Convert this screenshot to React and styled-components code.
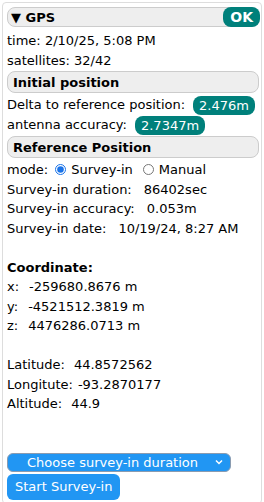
import React from 'react'
import styled, { createGlobalStyle } from 'styled-components'

const GlobalStyle = createGlobalStyle`
  body {
    margin: 0;
    background: #fff;
    font-family: "DejaVu Sans", Verdana, sans-serif;
    font-size: 13px;
    color: #000;
  }
`

const Panel = styled.div`
  margin: 2px;
  border: 1px solid #ddd;
  border-radius: 4px;
  padding: 4px 2px 4px 4px;
  height: 502px;
  box-sizing: border-box;
`

const Header = styled.div`
  display: flex;
  align-items: center;
  justify-content: space-between;
  background: #eee;
  border: 1px solid #ccc;
  border-radius: 8px;
  height: ${ ({ $top }) => $top ? 20 : 22 }px;
  box-sizing: border-box;
  padding-left: ${ ({ $top }) => $top ? 3 : 5 }px;
  font-weight: bold;
  font-size: 13px;
  margin: ${ ({ $top }) => $top ? '0 0 4px' : '1px 0 2px' };
`

const Badge = styled.span`
  display: inline-flex;
  align-items: center;
  background: #00807b;
  color: #fff;
  border-radius: 8px;
  padding: 0 ${ ({ $bold }) => $bold ? 7 : 6 }px;
  height: ${ ({ $bold }) => $bold ? 20 : 19 }px;
  margin-left: ${ ({ $bold }) => $bold ? 0 : 4 }px;
  margin-right: ${ ({ $bold }) => $bold ? -2 : 0 }px;
  font-weight: ${ ({ $bold }) => $bold ? 'bold' : 'normal' };
  font-size: ${ ({ $bold }) => $bold ? '14px' : '13px' };
  vertical-align: middle;
`

const Line = styled.div`
  line-height: ${ ({ $tall }) => $tall ? 20 : 19.5 }px;
  height: ${ ({ $tall }) => $tall ? 20 : 19.5 }px;
  white-space: nowrap;
  display: flex;
  align-items: center;
`

const Value = styled.span`
  margin-left: ${ ({ $gap }) => $gap }px;
`

const Gap = styled.div`
  height: ${ ({ $h }) => $h }px;
`

const Radio = styled.input.attrs({ type: 'radio' })`
  width: 11px;
  height: 11px;
  margin: 0 5px 0 ${ ({ $first }) => $first ? 7 : 10 }px;
  accent-color: #1a73e8;
`

const Select = styled.div`
  display: flex;
  align-items: center;
  justify-content: space-between;
  width: 224px;
  height: 19px;
  box-sizing: border-box;
  background: #2196f3;
  border: 1px solid #8a9bb0;
  border-radius: 6px;
  color: #fff;
  font-size: 13px;
  padding: 0 6px 0 19px;
`

const Button = styled.div`
  display: inline-flex;
  align-items: center;
  background: #2196f3;
  color: #fff;
  border-radius: 6px;
  height: 26px;
  padding: 0 8px;
  font-size: 13px;
  margin-top: 2px;
`

const App = () => (
  <>
    <GlobalStyle />
    <Panel>
      <Header $top>
        <span>▼ GPS</span>
        <Badge $bold>OK</Badge>
      </Header>
      <Line>time: 2/10/25, 5:08 PM</Line>
      <Line>satellites: 32/42</Line>
      <Header>Initial position</Header>
      <Line $tall>Delta to reference position:<Value $gap={ 4 }><Badge>2.476m</Badge></Value></Line>
      <Line $tall>antenna accuracy:<Value $gap={ 4 }><Badge>2.7347m</Badge></Value></Line>
      <Header>Reference Position</Header>
      <Line>mode:<Radio $first checked readOnly />Survey-in<Radio readOnly />Manual</Line>
      <Line>Survey-in duration:<Value $gap={ 12 }>86402sec</Value></Line>
      <Line>Survey-in accuracy:<Value $gap={ 12 }>0.053m</Value></Line>
      <Line>Survey-in date:<Value $gap={ 12 }>10/19/24, 8:27 AM</Value></Line>
      <Gap $h={ 19.5 } />
      <Line><b>Coordinate:</b></Line>
      <Line>x:<Value $gap={ 10 }>-259680.8676 m</Value></Line>
      <Line>y:<Value $gap={ 10 }>-4521512.3819 m</Value></Line>
      <Line>z:<Value $gap={ 10 }>4476286.0713 m</Value></Line>
      <Gap $h={ 19.5 } />
      <Line>Latitude:<Value $gap={ 9 }>44.8572562</Value></Line>
      <Line>Longitute:<Value $gap={ 5 }>-93.2870177</Value></Line>
      <Line>Altitude:<Value $gap={ 9 }>44.9</Value></Line>
      <Gap $h={ 39 } />
      <Select>
        <span>Choose survey-in duration</span>
        <svg width="10" height="10" viewBox="0 0 10 10">
          <path d="M2 3.5 L5 6.5 L8 3.5" fill="none" stroke="#fff" strokeWidth="1.5" />
        </svg>
      </Select>
      <Button>Start Survey-in</Button>
    </Panel>
  </>
)

export default App
